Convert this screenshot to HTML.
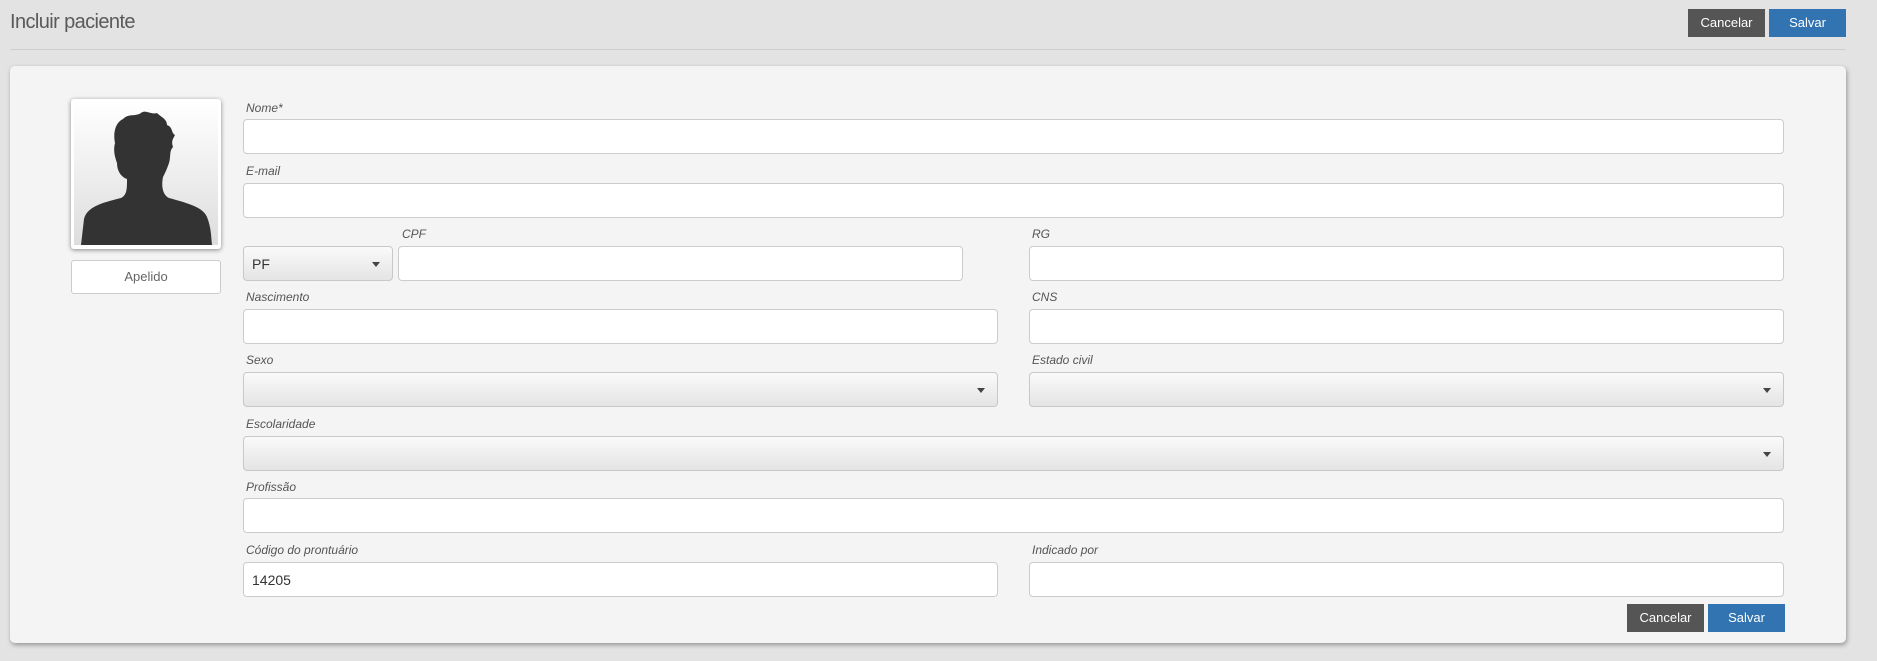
<!DOCTYPE html>
<html><head><meta charset="utf-8"><style>
*{box-sizing:border-box;margin:0;padding:0}
body{width:1877px;height:661px;overflow:hidden;background:#e3e3e3;font-family:"Liberation Sans",sans-serif;position:relative}
.a{position:absolute}
h1{position:absolute;left:10px;top:11px;font-size:20px;font-weight:normal;color:#5a5a5a;letter-spacing:-0.6px}
.line{left:10px;top:49px;width:1836px;height:1px;background:#cfcfcf}
.btn{position:absolute;height:28px;color:#fff;font-size:13px;text-align:center;line-height:28px}
.c{background:#555}.s{background:#3174b1}
.panel{left:10px;top:66px;width:1836px;height:577px;background:#f4f4f4;border-radius:5px;box-shadow:1px 2px 5px rgba(0,0,0,.35)}
.photo{left:71px;top:99px;width:150px;height:150px;background:#fff;border-radius:3px;box-shadow:0 1px 5px rgba(0,0,0,.45);overflow:hidden}
.ap{left:71px;top:260px;width:150px;height:34px;background:#fff;border:1px solid #ccc;border-radius:3px;text-align:center;line-height:32px;font-size:13px;color:#666}
.lb{position:absolute;font-size:12px;font-style:italic;color:#555}
.in{position:absolute;height:35px;background:#fff;border:1px solid #ccc;border-radius:4px}
.sel{position:absolute;height:35px;background:linear-gradient(#fafafa,#e4e4e4);border:1px solid #c8c8c8;border-radius:4px}
.sel:after{content:"";position:absolute;right:12px;top:15px;border:4px solid transparent;border-top:5px solid #444}
.v{position:absolute;left:8px;top:9px;font-size:14px;color:#333}
</style></head><body>
<h1>Incluir paciente</h1>
<div class="btn c" style="left:1688px;top:9px;width:77px">Cancelar</div>
<div class="btn s" style="left:1769px;top:9px;width:77px">Salvar</div>
<div class="a line"></div>
<div class="a panel"></div>
<div class="a photo"><svg width="150" height="150" viewBox="0 0 150 150"><defs><linearGradient id="g" x1="0" y1="0" x2="0" y2="1"><stop offset="0" stop-color="#fff"/><stop offset="1" stop-color="#ddd"/></linearGradient></defs><rect x="3" y="3" width="144" height="143" fill="url(#g)"/><path fill="#333" d="M10 146 L13 120 C16 108 30 104 50 99 C56 96 56 90 56 80 C50 78 46 72 46 64 C44 58 42 52 44 44 C42 34 44 24 52 20 C58 14 64 18 70 14 C74 10 80 16 86 14 C90 18 96 20 96 26 C102 28 100 34 104 36 C102 40 100 42 102 48 C98 52 100 58 98 64 C96 70 94 74 92 78 C90 88 92 96 98 99 C116 104 132 108 136 118 C140 128 140 136 141 146 Z"/></svg></div>
<div class="a ap">Apelido</div>

<div class="lb" style="left:246px;top:101px">Nome*</div>
<div class="in" style="left:243px;top:119px;width:1541px"></div>
<div class="lb" style="left:246px;top:164px">E-mail</div>
<div class="in" style="left:243px;top:183px;width:1541px"></div>

<div class="lb" style="left:402px;top:227px">CPF</div>
<div class="sel" style="left:243px;top:246px;width:150px"><span class="v">PF</span></div>
<div class="in" style="left:398px;top:246px;width:565px"></div>
<div class="lb" style="left:1032px;top:227px">RG</div>
<div class="in" style="left:1029px;top:246px;width:755px"></div>

<div class="lb" style="left:246px;top:290px">Nascimento</div>
<div class="in" style="left:243px;top:309px;width:755px"></div>
<div class="lb" style="left:1032px;top:290px">CNS</div>
<div class="in" style="left:1029px;top:309px;width:755px"></div>

<div class="lb" style="left:246px;top:353px">Sexo</div>
<div class="sel" style="left:243px;top:372px;width:755px"></div>
<div class="lb" style="left:1032px;top:353px">Estado civil</div>
<div class="sel" style="left:1029px;top:372px;width:755px"></div>

<div class="lb" style="left:246px;top:417px">Escolaridade</div>
<div class="sel" style="left:243px;top:436px;width:1541px"></div>

<div class="lb" style="left:246px;top:480px">Profissão</div>
<div class="in" style="left:243px;top:498px;width:1541px"></div>

<div class="lb" style="left:246px;top:543px">Código do prontuário</div>
<div class="in" style="left:243px;top:562px;width:755px"><span class="v">14205</span></div>
<div class="lb" style="left:1032px;top:543px">Indicado por</div>
<div class="in" style="left:1029px;top:562px;width:755px"></div>

<div class="btn c" style="left:1627px;top:604px;width:77px">Cancelar</div>
<div class="btn s" style="left:1708px;top:604px;width:77px">Salvar</div>
</body></html>
